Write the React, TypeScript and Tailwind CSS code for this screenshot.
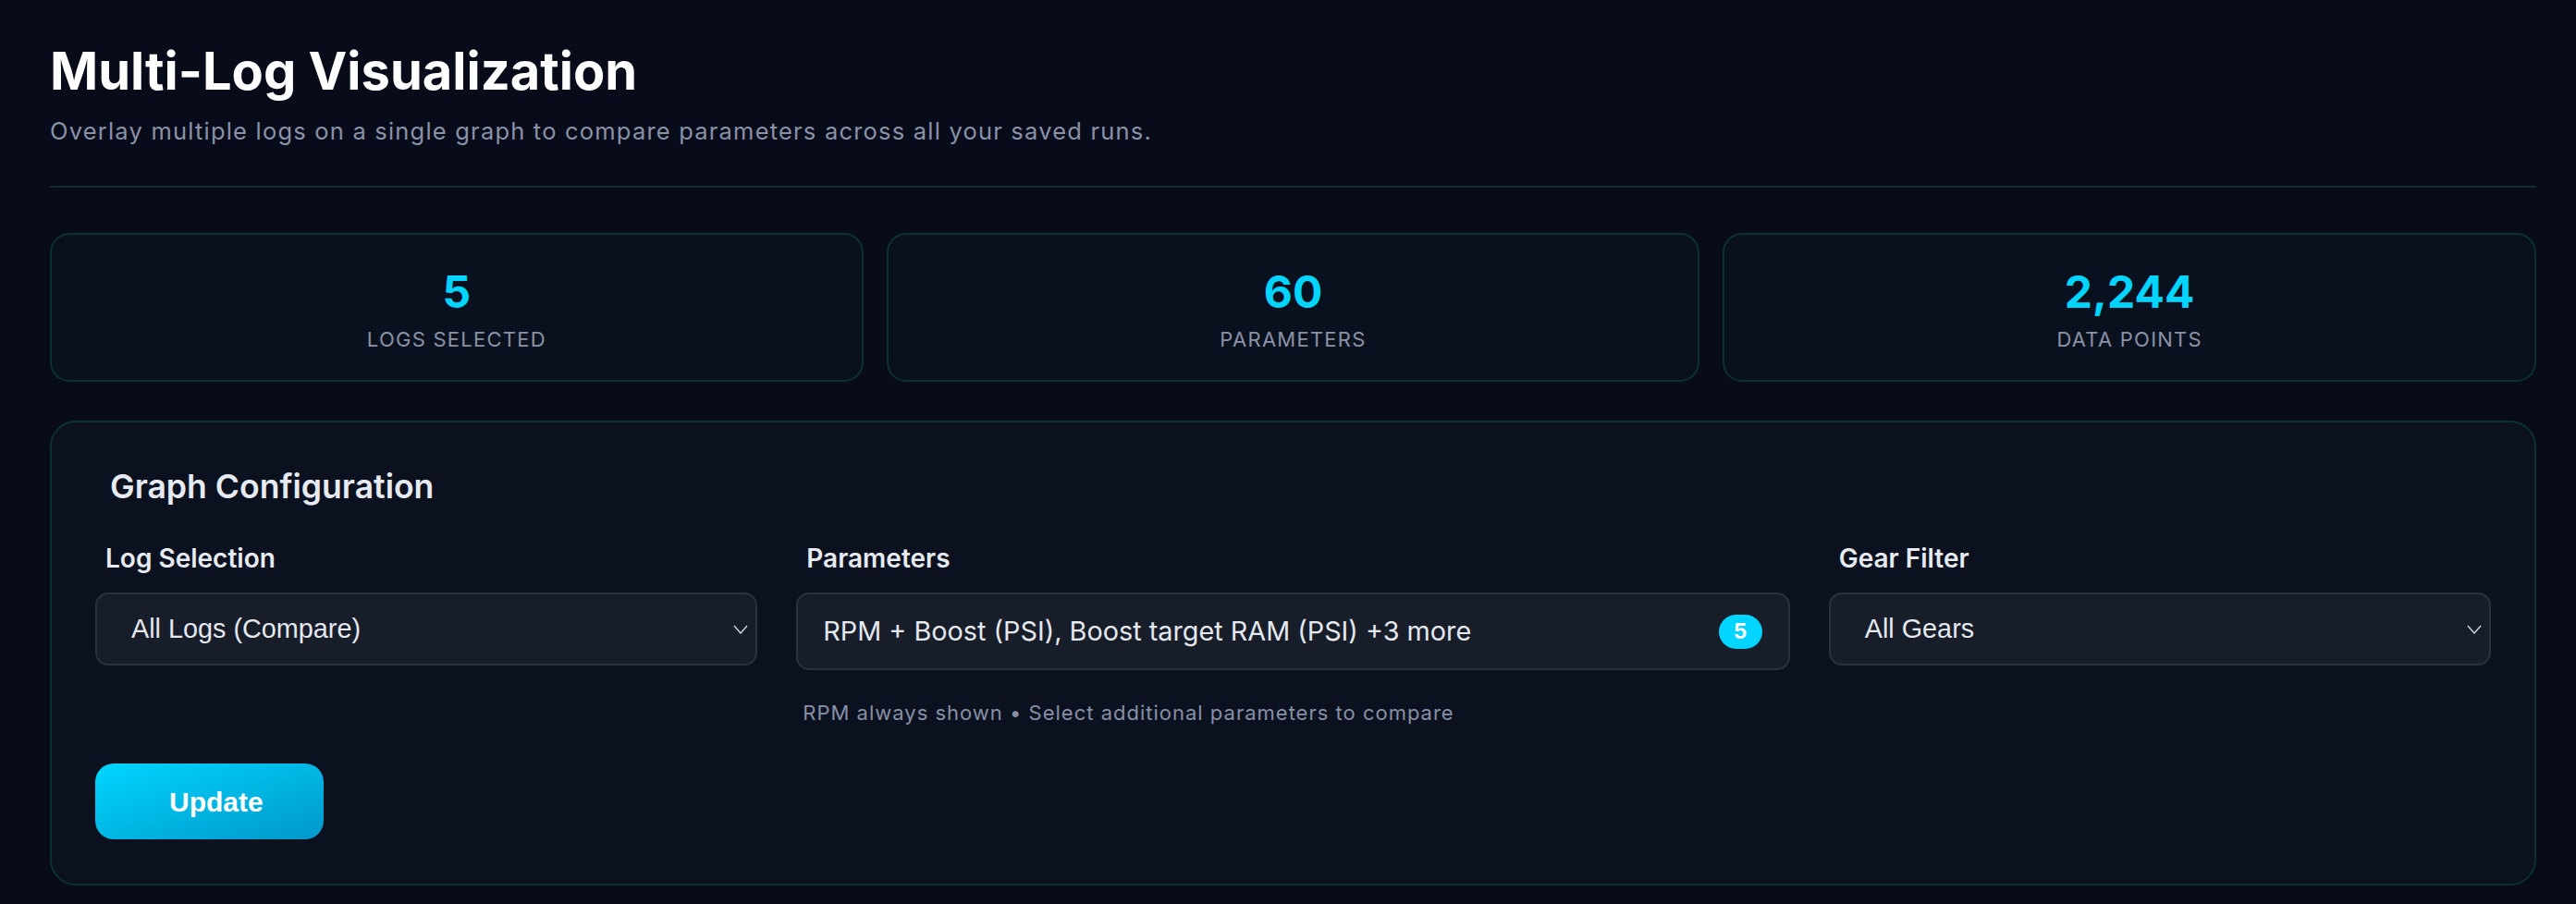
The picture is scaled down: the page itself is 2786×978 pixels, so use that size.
import React from "react";

const Chevron = () => (
  <svg width="16" height="10" viewBox="0 0 16 10" fill="none" className="shrink-0">
    <polyline points="1,1 8,9 15,1" stroke="#d4d8e0" strokeWidth="1.4" fill="none" />
  </svg>
);

const Stat = ({ value, label }: { value: string; label: string }) => (
  <div className="flex flex-col items-center rounded-[21px] border-2 border-[#0d3035] bg-[#0a111e] pt-[33px] pb-[29px]">
    <div className="text-[48px] leading-[58px] font-bold text-[#00d4ff]">{value}</div>
    <div className="mt-[7px] text-[22px] leading-[30px] tracking-[1.25px] text-[#8a92a7]">{label}</div>
  </div>
);

export default function App() {
  return (
    <div className="min-h-screen bg-[#070b1a] pl-[54px] pr-[43px] pt-[49px] pb-[19px] font-['Inter',sans-serif]">
      <header className="border-b-2 border-[#0d2f34] pb-[41px]">
        <h1 className="text-[56px] leading-none font-bold text-white">Multi-Log Visualization</h1>
        <p className="mt-[19px] text-[25.5px] leading-[36px] tracking-[1.2px] text-[#8a92a8]">
          Overlay multiple logs on a single graph to compare parameters across all your saved runs.
        </p>
      </header>

      <div className="mt-[49px] grid grid-cols-3 gap-[25px]">
        <Stat value="5" label="LOGS SELECTED" />
        <Stat value="60" label="PARAMETERS" />
        <Stat value="2,244" label="DATA POINTS" />
      </div>

      <section className="mt-[42px] rounded-[28px] border-2 border-[#0d3035] bg-[#0b111e] px-[47px] pt-[49px] pb-[48px]">
        <h2 className="pl-[16px] text-[35.6px] leading-[42px] font-semibold text-[#e6ebf3]">Graph Configuration</h2>

        <div className="mt-[39px] grid grid-cols-[1fr_1.5fr_1fr] gap-x-[42px]">
          <div className="flex flex-col">
            <label className="pl-[11px] text-[28px] leading-[34px] font-semibold text-[#e6eaf1]">Log Selection</label>
            <div className="mt-[20px] flex h-[79px] items-center justify-between rounded-[14px] border-2 border-[#2c313e] bg-[#181d2a] pl-[37px] pr-[8px] font-['Liberation_Sans',Arial,sans-serif] text-[28.8px] text-[#e4e8ef]">
              <span>All Logs (Compare)</span>
              <Chevron />
            </div>
          </div>

          <div className="flex flex-col">
            <label className="pl-[11px] text-[28px] leading-[34px] font-semibold text-[#e6eaf1]">Parameters</label>
            <div className="mt-[20px] flex h-[84px] items-center justify-between rounded-[14px] border-2 border-[#2c313e] bg-[#181d2a] pl-[27px] pr-[28px] text-[28.8px] text-[#e4e8ef]">
              <span>RPM + Boost (PSI), Boost target RAM (PSI) +3 more</span>
              <span className="flex h-[37px] min-w-[47px] items-center justify-center rounded-full bg-[#00d4ff] px-[16px] text-[23px] font-bold text-white">
                5
              </span>
            </div>
            <p className="mt-[32px] pl-[7px] text-[22px] leading-[28px] tracking-[1px] text-[#8790a6]">
              RPM always shown • Select additional parameters to compare
            </p>
          </div>

          <div className="flex flex-col">
            <label className="pl-[11px] text-[28px] leading-[34px] font-semibold text-[#e6eaf1]">Gear Filter</label>
            <div className="mt-[20px] flex h-[79px] items-center justify-between rounded-[14px] border-2 border-[#2c313e] bg-[#181d2a] pl-[37px] pr-[8px] font-['Liberation_Sans',Arial,sans-serif] text-[28.8px] text-[#e4e8ef]">
              <span>All Gears</span>
              <Chevron />
            </div>
          </div>
        </div>

        <button className="mt-[41px] flex h-[82px] w-[247px] items-center justify-start rounded-[20px] bg-gradient-to-br from-[#00d6ff] to-[#0098c9] pl-[80px] font-['Liberation_Sans',Arial,sans-serif] text-[30px] font-bold text-white">
          Update
        </button>
      </section>
    </div>
  );
}
